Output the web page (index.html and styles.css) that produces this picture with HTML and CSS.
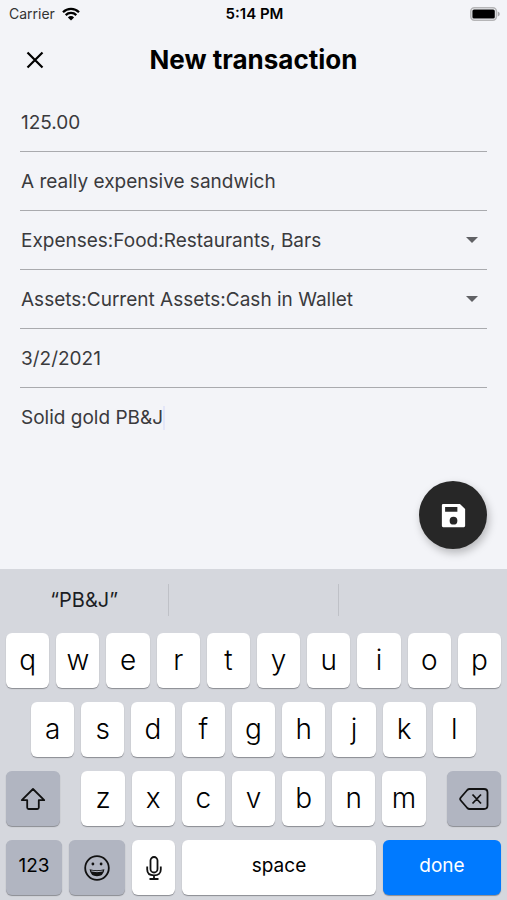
FILE: index.html
```
<!DOCTYPE html>
<html lang="en">
<head>
	<meta charset="utf-8">
	<meta name="viewport" content="width=device-width, initial-scale=1">
	<title>New transaction</title>
	<link rel="stylesheet" href="styles.css">
</head>
<body>
	<div class="status">
		<div class="carrier">
			<span>Carrier</span>
			<svg class="wifi" viewBox="0 0 18 14" aria-hidden="true">
				<path d="M1 5.2a11.4 11.4 0 0 1 16 0M3.7 8.1a7.6 7.6 0 0 1 10.6 0" fill="none" stroke="#000" stroke-width="2.3"/>
				<path d="M9 13.6 5.9 10.4a4.4 4.4 0 0 1 6.2 0z"/>
			</svg>
		</div>
		<time class="clock">5:14 PM</time>
		<svg class="battery" viewBox="0 0 30 14" aria-hidden="true">
			<rect x="0.8" y="0.8" width="25.6" height="12.4" rx="3.6" fill="#f3f4f8" stroke="#b5b5b7" stroke-width="1.6"/>
			<rect x="2.4" y="2.5" width="22.4" height="9" rx="1.6"/>
			<path d="M27.8 4.6q2 .8 2 2.4t-2 2.4z" fill="#a5a5a8"/>
		</svg>
	</div>
	<header class="header">
		<button class="close" type="button" aria-label="Close">
			<svg viewBox="0 0 18 18"><path d="M1.5 1.5l15 15M16.5 1.5l-15 15"/></svg>
		</button>
		<h1>New transaction</h1>
	</header>
	<form class="form">
		<div class="field"><input type="text" aria-label="Amount" value="125.00"></div>
		<div class="field"><input type="text" aria-label="Description" value="A really expensive sandwich"></div>
		<div class="field">
			<select aria-label="Expense account"><option>Expenses:Food:Restaurants, Bars</option></select>
			<svg class="arrow" viewBox="0 0 12 6" aria-hidden="true"><path d="M0 0h12L6 6z"/></svg>
		</div>
		<div class="field">
			<select aria-label="Asset account"><option>Assets:Current Assets:Cash in Wallet</option></select>
			<svg class="arrow" viewBox="0 0 12 6" aria-hidden="true"><path d="M0 0h12L6 6z"/></svg>
		</div>
		<div class="field"><input type="text" aria-label="Date" value="3/2/2021"></div>
		<div class="field last"><input class="fit" type="text" aria-label="Notes" value="Solid gold PB&amp;J"><span class="caret"></span></div>
		<button class="save" type="submit" aria-label="Save">
			<svg viewBox="0 0 24 24"><path d="M17 3H4q-1 0-1 1v16q0 1 1 1h16q1 0 1-1V7l-4-4zm-5 16a3 3 0 1 1 0-6 3 3 0 0 1 0 6zm3-10H5.500V5.500H15z"/></svg>
		</button>
	</form>
	<div class="keyboard">
		<div class="suggestions">
			<button type="button">“PB&amp;J”</button>
			<button type="button" aria-label="No suggestion"></button>
			<button type="button" aria-label="No suggestion"></button>
		</div>
		<div class="row">
			<button class="key" type="button">q</button>
			<button class="key" type="button">w</button>
			<button class="key" type="button">e</button>
			<button class="key" type="button">r</button>
			<button class="key" type="button">t</button>
			<button class="key" type="button">y</button>
			<button class="key" type="button">u</button>
			<button class="key" type="button">i</button>
			<button class="key" type="button">o</button>
			<button class="key" type="button">p</button>
		</div>
		<div class="row inset">
			<button class="key" type="button">a</button>
			<button class="key" type="button">s</button>
			<button class="key" type="button">d</button>
			<button class="key" type="button">f</button>
			<button class="key" type="button">g</button>
			<button class="key" type="button">h</button>
			<button class="key" type="button">j</button>
			<button class="key" type="button">k</button>
			<button class="key" type="button">l</button>
		</div>
		<div class="row">
			<button class="key dark shift" type="button" aria-label="Shift">
				<svg width="26" height="24" viewBox="0 0 26 24"><path d="M13 2 1.800 13.200h5.400v7.300q0 1.500 1.500 1.500h8.600q1.500 0 1.500-1.500v-7.300h5.400z"/></svg>
			</button>
			<button class="key" type="button">z</button>
			<button class="key" type="button">x</button>
			<button class="key" type="button">c</button>
			<button class="key" type="button">v</button>
			<button class="key" type="button">b</button>
			<button class="key" type="button">n</button>
			<button class="key" type="button">m</button>
			<button class="key dark delete" type="button" aria-label="Delete">
				<svg width="30" height="22" viewBox="0 0 30 22"><path d="M10.500 1h14.500q3.500 0 3.500 3.500v13q0 3.500-3.500 3.500H10.500q-1.200 0-2.200-1L1.800 12.500q-1.300-1.500 0-3L8.300 2q1-1 2.200-1zM13.500 6.500l8.500 9M22 6.500l-8.500 9"/></svg>
			</button>
		</div>
		<div class="row">
			<button class="key dark word numbers" type="button">123</button>
			<button class="key dark emoji" type="button" aria-label="Emoji">
				<svg width="26" height="26" viewBox="0 0 26 26">
					<circle cx="13" cy="13" r="11.800"/>
					<path class="solid" d="M5.600 14.200q7.400 2.200 14.800 0-.8 7-7.400 7t-7.400-7z"/>
					<path class="teeth" d="M7.300 16q5.700 1.400 11.400 0"/>
					<circle class="solid" cx="8.900" cy="9" r="1.400"/>
					<circle class="solid" cx="17.100" cy="9" r="1.400"/>
				</svg>
			</button>
			<button class="key mic" type="button" aria-label="Dictate">
				<svg width="16" height="24" viewBox="0 0 16 24"><rect x="4.500" y="1" width="7" height="15.500" rx="3.500"/><path d="M1.200 10.500v3q0 5.800 6.800 5.800t6.800-5.800v-3M8 19.300V23M3.500 23h9"/></svg>
			</button>
			<button class="key word space" type="button">space</button>
			<button class="key word done" type="button">done</button>
		</div>
	</div>
</body>
</html>
```
FILE: styles.css
```
*{box-sizing:border-box;}
body{margin:0;min-height:100vh;display:flex;flex-direction:column;background-color:#f3f4f8;color:#000;font-family:Inter,"Liberation Sans",sans-serif;}
button,input,select{font:inherit;color:inherit;margin:0;padding:0;border:0;background:none;outline:0;}
button{cursor:pointer;}
svg{display:block;}

.status{display:grid;grid-template-columns:1fr auto 1fr;align-items:center;height:27px;padding:0 7px 0 9px;font-size:14px;}
.carrier{display:flex;align-items:center;gap:7px;color:#333;}
.wifi{width:18px;height:14px;}
.clock{font-size:15px;font-weight:600;}
.battery{width:30px;height:14px;justify-self:end;}

.header{display:grid;grid-template-columns:30px 1fr 30px;align-items:center;height:66px;padding:0 20px;}
.close{display:flex;justify-content:center;height:40px;align-items:center;}
.close svg{width:18px;height:18px;fill:none;stroke:#000;stroke-width:2.2;}
h1{margin:0;font-size:26px;line-height:30px;font-weight:700;text-align:center;}

.form{flex:1;display:flex;flex-direction:column;padding:0 20px 20px;font-size:19px;color:#3a3a3d;}
.field{display:flex;align-items:center;height:59px;padding-left:1px;border-bottom:1px solid #a9aaae;}
.field.last{border:0;}
.field input,.field select{flex:1;min-width:0;height:40px;appearance:none;}
.field .fit{flex:none;field-sizing:content;}
.arrow{width:12px;height:6px;margin-right:9px;margin-left:-21px;fill:#606165;pointer-events:none;}
.caret{width:2px;height:24px;background-color:#e3e6f8;}
.save{display:flex;align-items:center;justify-content:center;width:68px;height:68px;margin-top:auto;align-self:flex-end;border-radius:50%;background-color:#272727;box-shadow:2px 4px 8px rgb(0 0 0/25%);}
.save svg{width:31px;height:31px;fill:#fff;}

.keyboard{display:flex;flex-direction:column;gap:14px;padding:0 6px 5px;background-color:#d5d7dd;}
.suggestions{display:flex;height:50px;margin:0 -6px;padding-top:15px;font-size:20px;color:#1c1e24;}
.suggestions button{flex:1;height:32px;border-right:1px solid #bfc1c7;}
.suggestions button:last-child{border:0;}
.row{display:flex;gap:7px;}
.inset{padding:0 25px;}
.key{flex:1 1 0;min-width:0;height:55px;padding-bottom:2px;border-radius:6px;background-color:#fff;box-shadow:0 1px 1px #8a8c92;font-size:28px;line-height:32px;font-weight:300;color:#000;}
.key svg{margin:0 auto;fill:none;stroke:#111;stroke-width:1.8;stroke-linejoin:round;}
.key:has(svg){padding-bottom:0;}
.key .solid{fill:#111;stroke:none;}
.key .teeth{stroke:#b1b5c1;stroke-width:1;}
.dark{background-color:#b1b5c1;}
.word{padding-bottom:4px;font-size:19px;font-weight:400;}
.shift,.delete{flex:0 0 11%;}
.shift{margin-right:14px;}
.delete{margin-left:14px;}
.numbers,.emoji{flex-grow:56;}
.mic{flex-grow:43;}
.space{flex-grow:194;}
.done{flex-grow:118;background-color:#007aff;color:#fff;}
```
